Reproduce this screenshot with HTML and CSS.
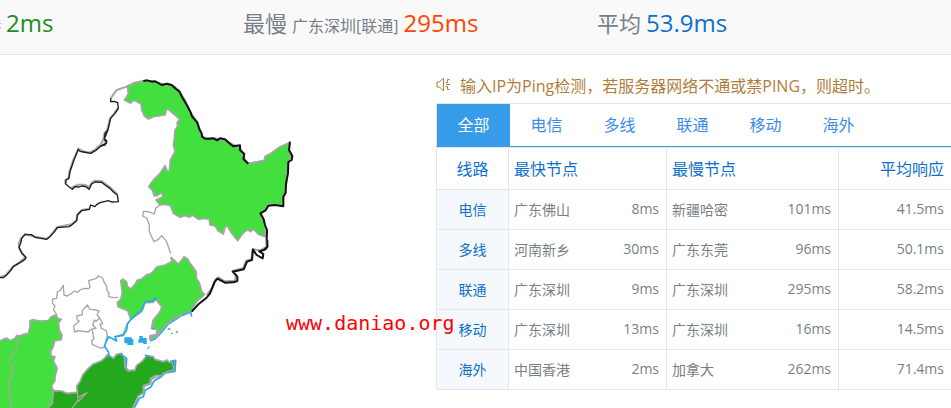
FILE: index.html
```html
<!DOCTYPE html>
<html lang="zh-CN">
<head>
<meta charset="utf-8">
<title>Ping检测</title>
<link rel="stylesheet" href="styles.css">
</head>
<body>
<header class="summary">
  <div class="stat stat-first"><small>港</small><b class="fast">2ms</b></div>
  <div class="stat"><span>最慢</span><small>广东深圳[联通]</small><b class="slow">295ms</b></div>
  <div class="stat"><span>平均</span><b class="avg">53.9ms</b></div>
</header>
<main class="content">
  <div class="map">
    <svg viewBox="0 55 436 353" width="436" height="353" aria-hidden="true" fill="none" stroke-linejoin="round">
      <!-- Heilongjiang and the northern border -->
      <g transform="translate(90 70) scale(.33333)">
        <path class="light" d="M112 48L135 38 160 33 185 33 215 42 245 45 265 60 283 88 300 125 322 158 335 195 345 206 370 205 405 210 430 225 450 232 458 250 465 270 475 281 500 276 522 272 526 258 540 252 552 243 570 230 598 218 598 240 603 260 592 285 590 340 582 375 578 405 535 402 525 420 512 430 525 465 525 500 505 493 492 478 480 485 474 479 462 487 455 495 443 512 425 490 412 468 405 472 400 492 385 483 375 468 360 465 358 448 340 445 325 448 308 435 298 442 285 437 270 442 250 430 242 407 225 403 210 405 198 390 218 380 215 368 200 378 192 377 188 362 176 350 190 330 210 310 225 287 232 303 238 303 241 270 255 245 250 225 253 205 255 180 262 170 262 155 270 150 255 135 235 118 229 120 225 135 190 140 175 147 163 138 155 120 153 100 143 97 135 92 128 92 122 100 103 90 115 72Z"/>
        <path class="line" d="M210 405L197 415 193 432 175 425 160 424 158 438 170 444 178 465 178 485 192 515 205 508 215 497 230 515 240 545 243 550"/>
        <path class="shade" d="M62 85L80 60 110 50 135 38 160 33 185 33 215 42 245 45 265 60 283 88 300 125 322 158 335 195 345 206 370 205 405 210 430 225 450 232 458 250 465 270 475 281 522 272"/>
        <path class="shade" d="M0 248L16 238 28 228 43 223 48 215 40 208 46 195 53 175 60 145 73 130 83 115"/>
        <path class="border" d="M0 250L18 240 30 228 45 225 50 215 42 208 48 195 55 175 62 145 75 130 85 115 83 98 72 94 62 95 62 85"/>
        <path class="border heavy" d="M160 33L172 31 185 35 196 34 215 45 231 41 245 45 258 57 268 64 276 81 283 92 292 108 301 125 306 139 322 158 328 178 335 190 336 200 345 206 360 206 370 205 381 211 390 205 405 208 417 219 430 229 450 226 450 240 463 252 460 267 475 281"/>
        <path class="border heavy" d="M600 215L597 240 607 258 605 270 595 276 594 310 588 340 587 368 580 380 580 409 555 405 535 407 527 421 511 430 521 448 525 465 531 480 530 510 532 530 525 540"/>
      </g>
      <!-- Inner Mongolia border -->
      <g transform="translate(0 130) scale(.33333)">
        <path class="shade" d="M322 0L313 10 311 27 300 48 286 60 272 68 250 64 235 56 220 90 208 125 205 145 196 150 196 162 M215 172L235 164 255 164 267 172 275 158 285 152 305 153 330 172 352 192M268 236L245 240 232 253 230 270 215 283 172 291 150 318 140 326 105 320 75 312 63 325 56 340 58 355 76 382 60 396 38 410 18 435 0 441"/>
        <path class="border" d="M325 0L315 10 313 27 320 32 319 40 300 50 286 62 272 70 250 66 240 64 235 58 222 90 210 125 207 145 198 150 197 162 207 170 217 178 225 170 238 171 245 168 258 170 267 178 275 162 285 156 305 157 315 165 330 175 340 186 352 195 355 215 335 216 325 212 300 218 290 224 285 230 272 225 268 238 245 242 232 255 230 272 215 285 208 290 172 293 162 307 150 320 140 328 105 322 95 314 75 314 65 325 62 340 57 352 65 370 78 382 75 388 60 398 40 410 32 422 20 435 10 443 0 443"/>
      </g>
      <!-- Provinces around the Bohai Sea -->
      <g transform="translate(0 260) scale(.33333)">
        <path class="light" d="M-4 248L5 240 20 234 30 242 45 235 50 226 58 228 68 224 85 220 90 200 90 182 98 179 120 183 145 182 152 172 165 165 173 175 184 178 176 188 178 210 186 225 184 239 164 243 160 260 152 275 154 288 165 290 160 303 168 318 172 325 165 350 165 362 155 378 160 392 160 430 140 448 -4 448Z"/>
        <path class="line" d="M58 228L50 260 45 275 30 295 28 305 36 318 40 330 34 345 35 355 27 362 28 395 33 420 33 448"/>
        <path class="dark" d="M160 392L185 393 200 400 232 397 230 378 240 365 248 345 262 328 278 313 305 302 318 290 322 284 332 289 340 295 350 283 365 280 376 300 375 322 384 332 405 330 410 316 425 305 440 287 460 290 465 298 490 305 500 300 508 307 525 303 524 335 490 340 485 348 470 346 452 355 450 370 430 377 430 400 415 408 405 430 397 448 140 448 157 430Z"/>
        <path class="line" d="M232 397L234 420 215 448M262 397L234 425M262 397L235 412"/>
        <path class="line" d="M173 175L168 160 160 148 165 138 157 130 158 117 170 115 172 95 180 92 190 76 192 105 202 108 215 100 223 93 233 97 240 90 253 85 265 86 270 82 266 62 278 58 288 56 295 48 308 54 313 68 320 78 321 92 327 98 326 110 340 113 355 112"/>
        <path class="line" d="M262 135L270 148 283 149 297 153 291 165 299 174 288 184 283 180 278 195 288 205 272 208 265 216 235 212 224 216 221 198 238 184 232 180 230 168 247 164 247 152ZM299 174L308 190 300 193 304 205 319 212 322 225 313 262 300 264 277 253 275 243 282 236 276 208"/>
        <path class="light" d="M520 -2L535 12 545 1 552 -10 562 -4 570 9 589 35 589 55 598 68 605 94 614 103 590 125 573 152 548 164 520 177 500 194 485 210 470 226 460 238 449 237 450 227 470 224 470 208 455 205 459 181 480 155 485 140 466 117 460 127 435 128 425 155 392 178 383 152 354 140 352 128 362 118 367 98 362 62 370 57 380 66 382 79 392 87 405 73 412 60 425 57 440 44 450 42 458 36 470 21 495 15 515 5 513 -8Z"/>
        <path class="line" d="M392 178L380 195 370 222 348 230"/>
        <path class="coast" d="M470 118L466 113 458 124 435 125 427 148 392 179 382 192 380 210 370 226 345 230 350 243 326 230 313 258 325 275 328 290M360 282L380 295 378 325 385 331M575 170L572 156 545 167 505 192 480 222 465 237 450 243M455 205H468M435 285L448 290M510 305L527 301 525 333 498 336 484 350 462 363 452 382 436 390 430 410 418 415 403 443"/>
        <path class="line" d="M480 158L462 178 457 199 472 208 470 224 452 228 452 238 472 228 485 208 520 178 548 164M372 300L376 322 384 333 405 330M515 306L520 318 522 328 490 340 484 347 455 357 452 372 432 380 432 398 415 408 403 434"/>
        <path class="isle" d="M373 232h22v5h5v18h-18v-5h-9ZM418 228h10v6h12v18h-10v-4h-15v-10h3ZM442 263h7v-4h-4v8h-4ZM513 218h5v4h-5ZM528 214h5v5h-5ZM503 205h8v4h-8Z"/>
      </g>
      <!-- Eastern border down to the coast -->
      <g transform="translate(110 240) scale(.33333)">
        <path class="shade" d="M468 0L470 20 450 32 428 27 424 58 408 62 400 85 368 92 378 105 375 122 345 124 325 112 315 120 305 145 290 165"/>
        <path class="border heavy" d="M472 0L472 20 462 30 448 34 460 42 458 55 440 45 429 29 426 60 411 65 401 88 368 95 382 110 382 123 370 127 345 128 322 116 314 126 300 160 289 174 265 193 245 215"/>
      </g>
    </svg>
    <p class="watermark">www.daniao.org</p>
  </div>
  <section class="panel">
    <p class="notice">
      <svg class="speaker" width="16" height="16" viewBox="0 0 16 16" fill="none" stroke="currentColor" aria-hidden="true"><path d="M1 5H3.500L7.500 1V14L3.500 10H1ZM9.500 5.500H11.500V2.500H13.500M10 7.500H14M9.500 9.500H11.500V12.500H13.500"/></svg>
      <span>输入IP为Ping检测，若服务器网络不通或禁PING，则超时。</span>
    </p>
    <nav class="tabs">
      <button class="tab active" type="button">全部</button>
      <button class="tab" type="button">电信</button>
      <button class="tab" type="button">多线</button>
      <button class="tab" type="button">联通</button>
      <button class="tab" type="button">移动</button>
      <button class="tab" type="button">海外</button>
    </nav>
    <table class="results">
      <colgroup><col class="c-line"><col class="c-name"><col class="c-fast"><col class="c-name"><col class="c-slow"><col></colgroup>
      <thead>
        <tr><th class="line-name" scope="col">线路</th><th scope="col" colspan="2">最快节点</th><th scope="col" colspan="2">最慢节点</th><th class="num last" scope="col">平均响应</th></tr>
      </thead>
      <tbody>
        <tr><th class="line-name" scope="row">电信</th><td class="node">广东佛山</td><td class="num">8ms</td><td class="node">新疆哈密</td><td class="num">101ms</td><td class="num last">41.5ms</td></tr>
        <tr><th class="line-name" scope="row">多线</th><td class="node">河南新乡</td><td class="num">30ms</td><td class="node">广东东莞</td><td class="num">96ms</td><td class="num last">50.1ms</td></tr>
        <tr><th class="line-name" scope="row">联通</th><td class="node">广东深圳</td><td class="num">9ms</td><td class="node">广东深圳</td><td class="num">295ms</td><td class="num last">58.2ms</td></tr>
        <tr><th class="line-name" scope="row">移动</th><td class="node">广东深圳</td><td class="num">13ms</td><td class="node">广东深圳</td><td class="num">16ms</td><td class="num last">14.5ms</td></tr>
        <tr><th class="line-name" scope="row">海外</th><td class="node">中国香港</td><td class="num">2ms</td><td class="node">加拿大</td><td class="num">262ms</td><td class="num last">71.4ms</td></tr>
      </tbody>
    </table>
  </section>
</main>
</body>
</html>
```
FILE: styles.css
```css
* { box-sizing: border-box; }

body {
  margin: 0;
  overflow: hidden;
  background: #fff;
  color: #777f88;
  font-family: "Open Sans", "Noto Sans CJK SC", sans-serif;
  font-size: 14px;
}

p { margin: 0; }

.summary {
  display: grid;
  grid-template-columns: 243px 354px 1fr;
  height: 55px;
  background: #f9f9f9;
  border-bottom: 1px solid #e6e6e6;
  overflow: hidden;
}

.stat {
  display: flex;
  align-items: baseline;
  gap: 5px;
  font-size: 22px;
  line-height: 46px;
  white-space: nowrap;
  color: #777f88;
}

.stat-first { margin-left: -15px; }
.stat small { font-size: 16px; }
.stat b { font-size: 24px; font-weight: 400; }
.stat .fast { color: #228b22; }
.stat .slow { color: #ff4500; }
.stat .avg { color: #0e70ca; }

.content { display: flex; }

.map {
  position: relative;
  flex: none;
}

.map svg { display: block; }

.light, .dark { stroke: #a6a6a6; stroke-width: 5; }
.light { fill: #43df3f; }
.dark { fill: #24a91e; }
.line { stroke: #a6a6a6; stroke-width: 4; }
.shade { stroke: #a6a6a6; stroke-width: 6; }
.border { stroke: #1c1c1c; stroke-width: 4; }
.heavy { stroke: #111; stroke-width: 6; }
.coast { stroke: #27a9ee; stroke-width: 5; }
.isle { fill: #27a9ee; }

.watermark {
  position: absolute;
  left: 286px;
  top: 256px;
  z-index: 1;
  color: #f00;
  font: 20px/24px "DejaVu Sans Mono", monospace;
  white-space: nowrap;
}

.panel {
  flex: 1;
  min-width: 0;
}

.notice {
  display: flex;
  align-items: center;
  gap: 8px;
  height: 48px;
  padding-top: 11px;
  color: #b07d3c;
  font-size: 16px;
  white-space: nowrap;
}

.speaker { flex: none; }

.tabs {
  display: flex;
  height: 44px;
  border: solid #e6e6e6;
  border-width: 1px 0 0 1px;
  border-bottom: 1px solid #369be9;
}

.tab {
  width: 73px;
  padding: 0 0 2px;
  border: 0;
  background: none;
  color: #3c8ce7;
  font: inherit;
  font-size: 16px;
}

.tab.active { background: #369be9; color: #fff; }

.results {
  width: 100%;
  table-layout: fixed;
  border-spacing: 0;
  border-top: 1px solid #e6e6e6;
}

.c-line { width: 73px; }
.c-name { width: 90px; }
.c-fast { width: 68px; }
.c-slow { width: 82px; }

.results th, .results td {
  height: 40px;
  padding: 0 7px 2px 5px;
  border-bottom: 1px solid #e6e6e6;
  border-right: 1px solid #e6e6e6;
  font-weight: 400;
  text-align: left;
  white-space: nowrap;
}

.results thead th { height: 42px; font-size: 16px; color: #0e70ca; }
.results .node { border-right: 0; padding-right: 0; }
.results .num { text-align: right; }
.results .last { border-right: 0; }
.results .line-name {
  padding-left: 0;
  padding-right: 0;
  border-left: 1px solid #e6e6e6;
  text-align: center;
}
.results tbody .line-name { background: #f5f9fd; color: #0e70ca; }
```
